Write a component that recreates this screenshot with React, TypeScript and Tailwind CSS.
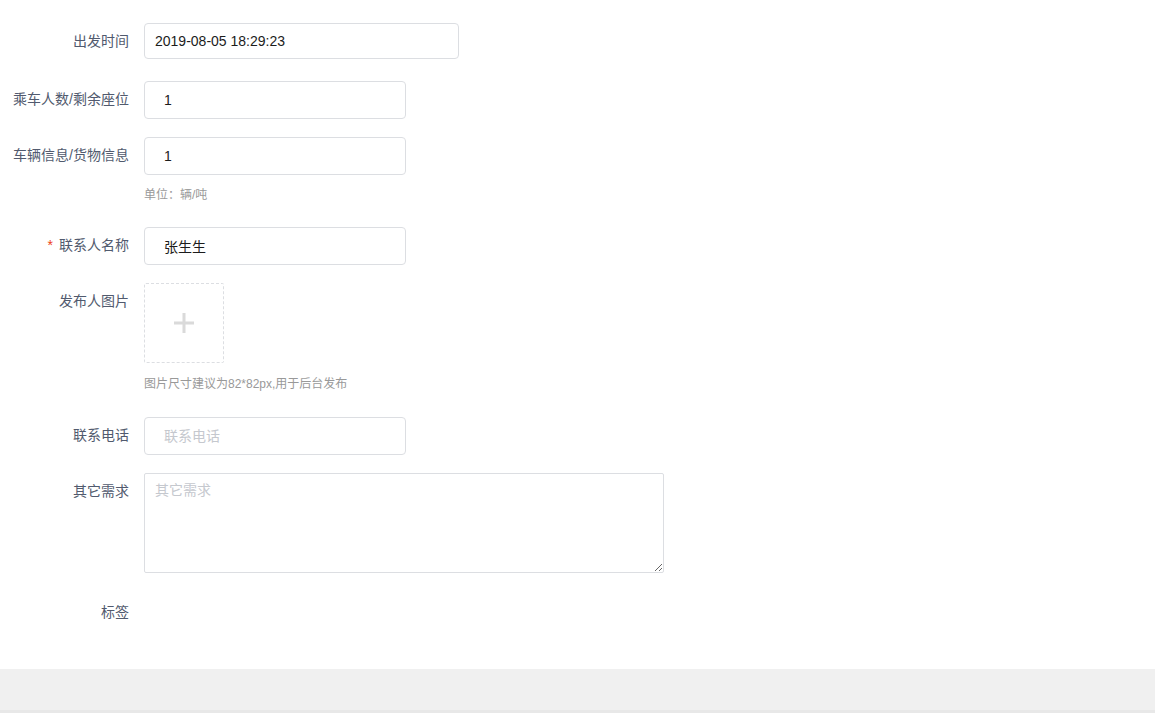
import React from 'react';

const font = { fontFamily: '"Liberation Sans", "Noto Sans CJK SC", sans-serif' };

interface FieldProps {
  label: string;
  required?: boolean;
  className?: string;
  children: React.ReactNode;
}

const Field = ({ label, required, className = '', children }: FieldProps) => (
  <div className={`flex items-start ${className}`}>
    <label className="w-[129px] shrink-0 text-right text-[14px] leading-[37px] text-[#515a6e]">
      {required && <span className="mr-[6px] text-[#ed4014]">*</span>}
      {label}
    </label>
    <div className="ml-[15px]">{children}</div>
  </div>
);

const inputCls =
  'block h-[38px] w-[262px] rounded-[4px] border border-[#dcdee2] bg-white px-[19px] text-[14px] text-[#1c1c1c] outline-none placeholder:text-[#c5c8ce]';

export default function App() {
  return (
    <div className="flex h-[713px] w-full flex-col bg-white" style={font}>
      {/* 表单 */}
      <div className="flex-1 pt-[23px]">
        <Field label="出发时间">
          <input
            className="block h-[36px] w-[315px] rounded-[4px] border border-[#dcdee2] bg-white px-[10px] text-[14px] text-[#1c1c1c] outline-none"
            defaultValue="2019-08-05 18:29:23"
          />
        </Field>

        <Field label="乘车人数/剩余座位" className="mt-[21px]">
          <input className={inputCls} defaultValue="1" />
        </Field>

        <Field label="车辆信息/货物信息" className="mt-[18px]">
          <input className={inputCls} defaultValue="1" />
          <div className="mt-[11px] text-[12px] leading-[18px] text-[#999]">单位：辆/吨</div>
        </Field>

        <Field label="联系人名称" required className="mt-[23px]">
          <input className={inputCls} defaultValue="张生生" />
        </Field>

        <Field label="发布人图片" className="mt-[18px]">
          <div className="flex h-[80px] w-[80px] items-center justify-center rounded-[2px] border border-dashed border-[#dcdee2] bg-white">
            <svg width="20" height="20" viewBox="0 0 20 20">
              <rect x="0" y="8.5" width="20" height="3" fill="#dadada" />
              <rect x="8.5" y="0" width="3" height="20" fill="#dadada" />
            </svg>
          </div>
          <div className="mt-[12px] text-[12px] leading-[18px] text-[#999]">
            图片尺寸建议为82*82px,用于后台发布
          </div>
        </Field>

        <Field label="联系电话" className="mt-[24px]">
          <input className={inputCls} placeholder="联系电话" />
        </Field>

        <Field label="其它需求" className="mt-[18px]">
          <textarea
            className="block h-[100px] w-[520px] rounded-[2px] border border-[#dcdee2] bg-white px-[10px] py-[5px] text-[14px] leading-[22px] text-[#1c1c1c] outline-none placeholder:text-[#c5c8ce]"
            placeholder="其它需求"
          />
        </Field>

        <Field label="标签" className="mt-[21px]">
          <div className="h-[37px]" />
        </Field>
      </div>

      {/* 底部 */}
      <div className="h-[44px] shrink-0 border-b-[3px] border-[#e8e8e8] bg-[#f0f0f0]" />
    </div>
  );
}
